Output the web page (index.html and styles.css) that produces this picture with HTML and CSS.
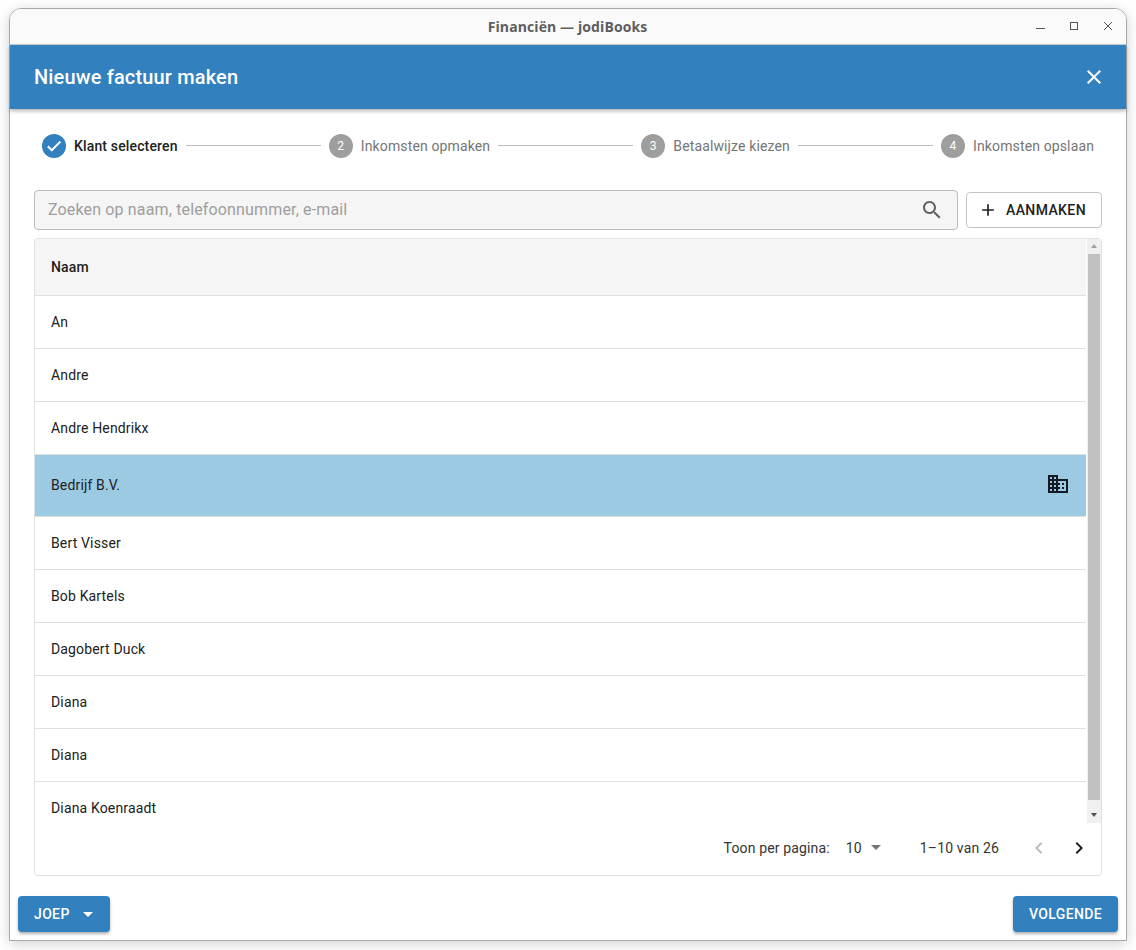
FILE: index.html
```html
<!DOCTYPE html>
<html lang="nl">
<head>
    <meta charset="UTF-8">
    <title>Financiën — jodiBooks</title>
    <link rel="stylesheet" href="styles.css">
</head>
<body>
    <div class="window">
        <div class="titlebar">
            <span class="titlebar-text">Financiën — jodiBooks</span>
            <div class="window-controls">
                <svg width="12" height="12" viewBox="0 0 12 12"><path d="M2 7.5h9" stroke="#555" stroke-width="1"/></svg>
                <svg width="12" height="12" viewBox="0 0 12 12"><rect x="2.5" y="1.5" width="7" height="7" fill="none" stroke="#555"/></svg>
                <svg width="12" height="12" viewBox="0 0 12 12"><path d="M2 1l8 8M10 1l-8 8" stroke="#555" stroke-width="1"/></svg>
            </div>
        </div>

        <header class="header">
            <h1 class="header-title">Nieuwe factuur maken</h1>
            <svg class="header-close" width="24" height="24" viewBox="0 0 24 24"><path fill="#fff" d="M19 6.41 17.59 5 12 10.59 6.41 5 5 6.41 10.59 12 5 17.59 6.41 19 12 13.41 17.59 19 19 17.59 13.41 12z"/></svg>
        </header>

        <div class="content">
            <div class="stepper">
                <div class="step step-active">
                    <span class="step-circle step-done">
                        <svg width="18" height="18" viewBox="0 0 24 24"><path fill="#fff" stroke="#fff" stroke-width="1" d="M9 16.17 4.83 12l-1.42 1.41L9 19 21 7l-1.41-1.41z"/></svg>
                    </span>
                    <span>Klant selecteren</span>
                </div>
                <div class="step-line"></div>
                <div class="step"><span class="step-circle">2</span><span>Inkomsten opmaken</span></div>
                <div class="step-line"></div>
                <div class="step"><span class="step-circle">3</span><span>Betaalwijze kiezen</span></div>
                <div class="step-line"></div>
                <div class="step"><span class="step-circle">4</span><span>Inkomsten opslaan</span></div>
            </div>

            <div class="toolbar">
                <div class="search">
                    <span class="search-placeholder">Zoeken op naam, telefoonnummer, e-mail</span>
                    <svg width="24" height="24" viewBox="0 0 24 24"><path fill="#616161" d="M15.5 14h-.79l-.28-.27C15.41 12.59 16 11.11 16 9.5 16 5.91 13.09 3 9.5 3S3 5.91 3 9.5 5.91 16 9.5 16c1.61 0 3.09-.59 4.23-1.57l.27.28v.79l5 4.99L20.49 19l-4.99-5zm-6 0C7.01 14 5 11.99 5 9.5S7.01 5 9.5 5 14 7.01 14 9.5 11.99 14 9.5 14z"/></svg>
                </div>
                <button class="btn-outline">
                    <svg width="20" height="20" viewBox="0 0 24 24"><path fill="#212121" d="M19 13h-6v6h-2v-6H5v-2h6V5h2v6h6v2z"/></svg>
                    AANMAKEN
                </button>
            </div>

            <div class="table-card">
                <div class="table-scroll">
                    <div class="table-rows">
                        <div class="row-head">Naam</div>
                        <div class="row">An</div>
                        <div class="row">Andre</div>
                        <div class="row">Andre Hendrikx</div>
                        <div class="row row-selected">
                            <span>Bedrijf B.V.</span>
                            <svg width="24" height="24" viewBox="0 0 24 24"><path fill="#141b22" d="M12 7V3H2v18h20V7H12zM6 19H4v-2h2v2zm0-4H4v-2h2v2zm0-4H4V9h2v2zm0-4H4V5h2v2zm4 12H8v-2h2v2zm0-4H8v-2h2v2zm0-4H8V9h2v2zm0-4H8V5h2v2zm10 12h-8v-2h2v-2h-2v-2h2v-2h-2V9h8v10zm-2-8h-2v2h2v-2zm0 4h-2v2h2v-2z"/></svg>
                        </div>
                        <div class="row">Bert Visser</div>
                        <div class="row">Bob Kartels</div>
                        <div class="row">Dagobert Duck</div>
                        <div class="row">Diana</div>
                        <div class="row">Diana</div>
                        <div class="row">Diana Koenraadt</div>
                    </div>
                    <div class="scrollbar">
                        <span class="arrow-up"></span>
                        <div class="scroll-track"><div class="scroll-thumb"></div></div>
                        <span class="arrow-down"></span>
                    </div>
                </div>
                <div class="pagination">
                    <span class="per-page">Toon per pagina:</span>
                    <span class="per-page-value">10</span>
                    <span class="caret caret-grey"></span>
                    <span class="page-range">1–10 van 26</span>
                    <svg class="page-prev" width="24" height="24" viewBox="0 0 24 24"><path fill="#bdbdbd" d="M15.41 7.41 14 6l-6 6 6 6 1.41-1.41L10.83 12z"/></svg>
                    <svg class="page-next" width="24" height="24" viewBox="0 0 24 24"><path fill="#212121" d="M10 6 8.59 7.41 13.17 12l-4.58 4.59L10 18l6-6z"/></svg>
                </div>
            </div>
        </div>

        <div class="actions">
            <button class="btn-primary btn-joep">JOEP <span class="caret"></span></button>
            <button class="btn-primary">VOLGENDE</button>
        </div>
    </div>
</body>
</html>
```

FILE: styles.css
```css
* {
    box-sizing: border-box;
}
html, body {
    height: 100%;
}
body {
    margin: 0;
    padding: 8px 9px 9px;
    background: #fff;
    font-family: Roboto, sans-serif;
    font-size: 14px;
    letter-spacing: 0.15px;
    color: #212121;
    overflow: hidden;
}
.window {
    height: 933px;
    display: flex;
    flex-direction: column;
    background: #fff;
    border: 1px solid #a8a8a8;
    border-top-left-radius: 12px;
    border-top-right-radius: 12px;
    box-shadow: 0 3px 14px rgba(0, 0, 0, 0.18);
}
.titlebar {
    height: 36px;
    flex: none;
    display: flex;
    align-items: center;
    justify-content: center;
    position: relative;
    background: #fafafa;
    border-bottom: 1px solid #d0d0d0;
    border-top-left-radius: 11px;
    border-top-right-radius: 11px;
}
.titlebar-text {
    font-family: "Open Sans", sans-serif;
    font-weight: 700;
    font-size: 14px;
    letter-spacing: 0.1px;
    color: #5e5e5e;
    margin-left: -1px;
}
.window-controls {
    position: absolute;
    right: 12px;
    top: 12px;
    display: flex;
    gap: 22px;
}
.header {
    height: 64px;
    flex: none;
    display: flex;
    align-items: center;
    justify-content: space-between;
    padding: 0 20px 0 24px;
    background: #3280bd;
    box-shadow: 0 2px 4px rgba(0, 0, 0, 0.3);
    position: relative;
}
.header-title {
    margin: 0;
    font-size: 20px;
    font-weight: 500;
    color: #fff;
}
.content {
    flex: none;
    display: flex;
    flex-direction: column;
    padding: 0 24px;
}
.stepper {
    display: flex;
    align-items: center;
    height: 72px;
    padding: 0 8px;
    flex: none;
}
.step {
    display: flex;
    align-items: center;
    gap: 8px;
    color: #757575;
    letter-spacing: 0.13px;
    padding-top: 1px;
}
.step-active {
    color: #212121;
    font-weight: 500;
    letter-spacing: 0.15px;
}
.step-circle {
    width: 24px;
    height: 24px;
    border-radius: 50%;
    display: flex;
    align-items: center;
    justify-content: center;
    background: #9e9e9e;
    color: #fff;
    font-size: 12px;
    font-weight: 400;
}
.step-done {
    background: #3280bd;
}
.step-line {
    flex: 1;
    height: 1px;
    margin: 0 8px;
    background: #bdbdbd;
}
.toolbar {
    display: flex;
    align-items: center;
    gap: 8px;
    height: 40px;
    margin-top: 9px;
    flex: none;
}
.search {
    flex: 1;
    height: 40px;
    display: flex;
    align-items: center;
    justify-content: space-between;
    padding: 0 13px 2px;
    background: #f5f5f5;
    border: 1px solid #bdbdbd;
    border-radius: 4px;
}
.search svg {
    margin-top: 2px;
}
.search-placeholder {
    font-size: 16px;
    color: #9e9e9e;
}
.btn-outline {
    width: 136px;
    height: 36px;
    display: flex;
    align-items: center;
    justify-content: center;
    gap: 8px;
    padding: 0 4px 0 0;
    background: #fff;
    border: 1px solid #c4c4c4;
    border-radius: 4px;
    font-family: inherit;
    font-size: 14px;
    font-weight: 500;
    letter-spacing: 0.4px;
    color: #212121;
}
.table-card {
    margin-top: 8px;
    height: 638px;
    flex: none;
    display: flex;
    flex-direction: column;
    border: 1px solid #e0e0e0;
    border-radius: 4px;
    overflow: hidden;
}
.table-scroll {
    height: 584px;
    flex: none;
    display: flex;
    overflow: hidden;
}
.table-rows {
    flex: 1;
    min-width: 0;
}
.row-head {
    height: 57px;
    display: flex;
    align-items: center;
    padding: 0 16px;
    background: #f5f5f5;
    border-bottom: 1px solid #e0e0e0;
    font-weight: 500;
}
.row {
    height: 53px;
    display: flex;
    align-items: center;
    justify-content: space-between;
    padding: 0 16px;
    border-bottom: 1px solid #e0e0e0;
}
.row-selected {
    height: 62px;
    background: #9ccae2;
    padding-bottom: 1px;
}
.row-selected svg {
    margin-bottom: 3px;
}
.scrollbar {
    width: 15px;
    flex: none;
    display: flex;
    flex-direction: column;
    align-items: center;
    background: #f0f0f0;
    border-left: 1px solid #fff;
}
.scroll-track {
    flex: 1;
    width: 100%;
    padding: 0 1px;
}
.scroll-thumb {
    height: 546px;
    background: #c1c1c1;
}
.arrow-up, .arrow-down {
    width: 0;
    height: 0;
    margin: 5px 0 6px;
    border-left: 3.5px solid transparent;
    border-right: 3.5px solid transparent;
}
.arrow-up {
    border-bottom: 4px solid #a0a0a0;
}
.arrow-down {
    border-top: 4px solid #505050;
}
.pagination {
    flex: 1;
    display: flex;
    align-items: center;
    justify-content: flex-end;
    padding: 0 10px 3px 0;
    color: #333;
}
.per-page-value {
    margin-left: 16px;
}
.caret {
    display: inline-block;
    width: 0;
    height: 0;
    border-left: 5px solid transparent;
    border-right: 5px solid transparent;
    border-top: 5px solid #fff;
}
.caret-grey {
    margin-left: 9px;
    border-top-color: #757575;
}
.page-range {
    margin-left: 39px;
}
.page-prev {
    margin-left: 28px;
}
.page-next {
    margin-left: 16px;
}
.actions {
    flex: 1;
    display: flex;
    align-items: flex-start;
    justify-content: space-between;
    padding: 20px 8px 0;
}
.btn-primary {
    height: 36px;
    padding: 0 16px;
    display: flex;
    align-items: center;
    background: #3280bd;
    border: none;
    border-radius: 4px;
    box-shadow: 0 2px 3px rgba(0, 0, 0, 0.3);
    font-family: inherit;
    font-size: 14px;
    font-weight: 500;
    letter-spacing: 0.35px;
    color: #fff;
}
.btn-joep {
    width: 92px;
}
.btn-joep .caret {
    margin-left: 13px;
}
```
